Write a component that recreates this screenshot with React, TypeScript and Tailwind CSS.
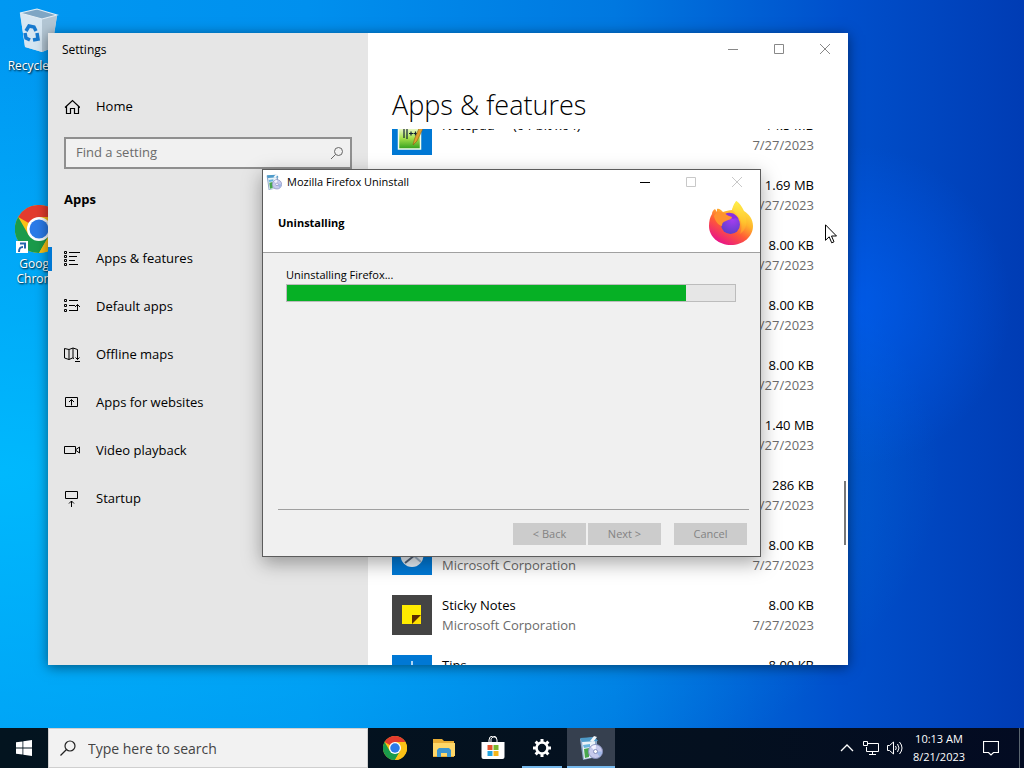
import { ReactNode } from "react";
import clsx from "clsx";

type AppEntry = {
    name?: string;
    publisher?: string;
    size: string;
    date: string;
    icon?: ReactNode;
};

const NotepadIcon = () => (
    <svg viewBox="0 0 40 40" className="size-10 shrink-0 bg-[#0078d4]">
        <defs>
            <linearGradient id="npp" x1="0" y1="0" x2="0" y2="1">
                <stop offset="0.2" stopColor="#f4fbd8" />
                <stop offset="0.6" stopColor="#a6e04a" />
                <stop offset="1" stopColor="#2f9e1e" />
            </linearGradient>
        </defs>
        <rect x="6.500" y="7" width="22" height="27" fill="url(#npp)" stroke="#f5ffe8" strokeWidth="1.500" />
        <path d="M12 10v13M15 10v14M17 18.500h4M19 16.500v4M21.500 18.500h4M23.500 16.500v4" stroke="#123" strokeWidth="1.200" />
        <path d="m21 30 1.500-6L28 11l3.500 1.500L25 26z" fill="#e0a030" stroke="#8b6018" strokeWidth=".6" />
    </svg>
);

const SnipIcon = () => (
    <svg viewBox="0 0 40 40" className="size-10 shrink-0 bg-[#0078d4]">
        <ellipse cx="20" cy="20" rx="11.500" ry="12" fill="#eaf1f7" />
        <path d="m13 28 10-8" stroke="#56657a" strokeWidth="2" fill="none" />
        <path d="m21 20 8 7" stroke="#9fb3c8" strokeWidth="2" fill="none" />
    </svg>
);

const StickyIcon = () => (
    <svg viewBox="0 0 40 40" className="size-10 shrink-0 bg-[#444]">
        <path d="M10 10h19v10l-9 9H10z" fill="#ffec00" />
        <path d="M20 20h9v9h-9z" fill="#ffe000" />
        <path d="M20 20h9l-9 9z" fill="#5c2d00" />
    </svg>
);

const TipsIcon = () => (
    <svg viewBox="0 0 40 40" className="size-10 shrink-0 bg-[#0078d4]">
        <path d="M20 6v8M12 12l3 4M28 12l-3 4" stroke="#e8f4ff" strokeWidth="1.500" />
        <circle cx="20" cy="22" r="6" fill="none" stroke="#fff" strokeWidth="1.500" />
    </svg>
);

const apps: AppEntry[] = [
    { name: "Notepad++ (64-bit x64)", size: "14.5 MB", date: "7/27/2023", icon: <NotepadIcon /> },
    { size: "1.69 MB", date: "7/27/2023" },
    { size: "8.00 KB", date: "7/27/2023" },
    { size: "8.00 KB", date: "7/27/2023" },
    { size: "8.00 KB", date: "7/27/2023" },
    { size: "1.40 MB", date: "7/27/2023" },
    { size: "286 KB", date: "7/27/2023" },
    { publisher: "Microsoft Corporation", size: "8.00 KB", date: "7/27/2023", icon: <SnipIcon /> },
    { name: "Sticky Notes", publisher: "Microsoft Corporation", size: "8.00 KB", date: "7/27/2023", icon: <StickyIcon /> },
    { name: "Tips", publisher: "Microsoft Corporation", size: "8.00 KB", date: "7/27/2023", icon: <TipsIcon /> },
];

const navItems = [
    {
        label: "Apps & features",
        active: true,
        icon: <path d="M.5.5h2v2h-2zM.5 4.500h2v2h-2zM.5 8.500h2v2h-2zM.5 12.500h2v2h-2zM5 1.500h11M5 5.500h8M5 9.500h6M5 13.500h9" />,
    },
    {
        label: "Default apps",
        icon: <path d="M.5.5h2v2h-2zM.5 5.500h2v2h-2zM.5 10.500h2v2h-2zM5 1.500h9M5 6.500h6M5 11.500h8M13.500 12V5.500M11 8l2.500-2.500L16 8" />,
    },
    {
        label: "Offline maps",
        icon: <path d="M10 11.500 8.500 11 5 12.500.5 11V1.500L5 2.500l4-1.500L13.500 2.500v3M5 2.500v10M9 1v10M13.500 5v7.500M11.500 10.500l2 2 2-2M11 14.500h5" />,
    },
    { label: "Apps for websites", icon: <path d="M1.500 2.500h12v9h-12zM7.500 10.500v-6M5 7l2.500-2.500L10 7" /> },
    { label: "Video playback", icon: <path d="M.5 3.500h11v7H.5zM12 6.500l3.500-2.500v6L12 7.500" /> },
    { label: "Startup", icon: <path d="M1.500.5h12v7h-12zM7.500 16v-6M5 12.500 7.500 10l2.500 2.500" /> },
];

const LineIcon = ({ children, className }: { children: ReactNode; className?: string }) => (
    <svg viewBox="0 0 16 16" fill="none" stroke="currentColor" className={clsx("size-4 shrink-0", className)}>
        {children}
    </svg>
);

const ChromeLogo = ({ className }: { className: string }) => (
    <svg viewBox="0 0 48 48" className={className}>
        <circle cx="24" cy="24" r="24" fill="#fbc116" />
        <path d="M24 24 3.200 12A24 24 0 0 1 44.800 12z" fill="#e33b2e" />
        <path d="M3.200 12A24 24 0 0 0 24 48l10.400-18L24 24l-10.400 6z" fill="#1a9b4b" />
        <path d="M24 12h20.800A24 24 0 0 1 24 48l10.400-18z" fill="#fbc116" />
        <circle cx="24" cy="24" r="12" fill="#fff" />
        <circle cx="24" cy="24" r="9.500" fill="#2b7be9" />
    </svg>
);

const RecycleBin = () => (
    <svg viewBox="0 0 40 44" className="h-11 w-10">
        <path d="m1 5 5 34 17 5 10-4 5-32z" fill="#d5e0e8" opacity=".95" />
        <path d="m1 5 22 6v33L6 39z" fill="#d6e6f2" />
        <path d="m23 11 15-4-5 33-10 4z" fill="#b3c6d4" />
        <path d="M1 5 18 1l20 6-15 4z" fill="#7fa6c4" stroke="#e4eef5" strokeWidth="1.200" />
        <path d="m7 23 3-5 5 1 2 4M18 25l1 6-5 1M11 32l-4-2-1-5" fill="none" stroke="#1679cf" strokeWidth="3.500" />
    </svg>
);

const InstallerIcon = ({ className }: { className: string }) => (
    <svg viewBox="0 0 24 24" className={className}>
        <path d="m1 3 14-2 3 4v16L4 24z" fill="#8ba6c8" />
        <path d="m3 5 13-2v18l-11 2z" fill="#eaf2f8" />
        <path d="m1 2 15-1 3 4-16 1z" fill="#4e9bc9" />
        <path d="m11 5 4-5 3 1-4 5z" fill="#f2f6fa" />
        <path d="m4 9 7-1v3l-6 1z" fill="#68b5dd" />
        <path d="m5 13 5-1v9l-4 1z" fill="#48a64e" />
        <circle cx="16.500" cy="15.500" r="7" fill="#c6c9ec" stroke="#8790bd" />
        <path d="M16.500 15.500 12 11a6 6 0 0 1 5-2z" fill="#f3f3ff" />
        <path d="m16.500 15.500 4 5a6 6 0 0 0 2.500-5z" fill="#9eb7e6" />
        <circle cx="16.500" cy="15.500" r="2" fill="#fff" stroke="#8790bd" />
    </svg>
);

const FirefoxLogo = () => (
    <svg viewBox="0 0 46 46" className="h-[46px] w-[46px]">
        <defs>
            <linearGradient id="fxBody" x1=".85" y1=".1" x2=".3" y2="1">
                <stop offset="0" stopColor="#fff04a" />
                <stop offset=".35" stopColor="#ffb52b" />
                <stop offset=".62" stopColor="#ff5b36" />
                <stop offset="1" stopColor="#e8128a" />
            </linearGradient>
            <linearGradient id="fxFlame" x1=".6" y1="0" x2=".5" y2="1">
                <stop offset="0" stopColor="#fff34d" />
                <stop offset=".6" stopColor="#ffc52e" />
                <stop offset="1" stopColor="#ff8a2b" />
            </linearGradient>
            <radialGradient id="fxGlobe" cx=".6" cy=".25" r=".8">
                <stop offset="0" stopColor="#a63df0" />
                <stop offset="1" stopColor="#5a40c8" />
            </radialGradient>
        </defs>
        <path d="M4 14c0-2 1-4 3-5l2 3V9c2-1 4 1 6 3 3-1 6-2 9-2l4-9c4 2 6 6 8 10 5 3 9 8 9 15 0 11-10 19-22 19S1 37 1 26c0-5 1-9 3-12z" fill="url(#fxBody)" />
        <path d="M24 10c1-5 3-8 5-9 1 6 6 8 8 14 3 8 1 15-5 19 2-5 2-11 0-15-2-4-4-6-8-9z" fill="url(#fxFlame)" />
        <circle cx="22.500" cy="24.500" r="9.500" fill="url(#fxGlobe)" />
        <path d="M17 14c5-3 12 0 14 6-2-2-4-2-6-1z" fill="#8a2fe0" />
        <path d="M6 16c2-4 6-5 10-3 2 2 5 3 8 4 0 2-4 3-6 4-3 1-4 2-4 5-4-1-7-5-8-10z" fill="#ff922e" />
    </svg>
);

const CaptionButtons = ({ dialog }: { dialog?: boolean }) => (
    <div className="flex">
        <button aria-label="Minimize" className={clsx("flex w-[46px] items-center justify-center", dialog ? "h-6 text-black" : "h-8 text-[#888]")}>
            <svg viewBox="0 0 10 10" className="size-[10px]"><path d="M0 5.500h10" stroke="currentColor" /></svg>
        </button>
        <button aria-label="Maximize" className={clsx("flex w-[46px] items-center justify-center", dialog ? "h-6 text-[#c8c8c8]" : "h-8 text-[#888]")}>
            <svg viewBox="0 0 10 10" className="size-[10px]"><path d="M.5.5h9v9h-9z" fill="none" stroke="currentColor" /></svg>
        </button>
        <button aria-label="Close" className={clsx("flex w-[46px] items-center justify-center", dialog ? "h-6 text-[#c8c8c8]" : "h-8 text-[#888]")}>
            <svg viewBox="0 0 10 10" className="size-[10px]"><path d="m0 0 10 10M10 0 0 10" stroke="currentColor" /></svg>
        </button>
    </div>
);

const Sidebar = () => (
    <aside className="flex w-80 shrink-0 flex-col bg-[#e6e6e6]">
        <div className="flex h-[34px] items-center px-[14px] text-xs">Settings</div>
        <a href="#home" className="mt-4 flex h-12 items-center gap-4 px-4">
            <LineIcon><path d="M1 8.500 8.500 1.500 16 8.500M2.500 7.500V14.500H6.500V9.500H10.500V14.500H14.500V7.500" strokeWidth="1.200" /></LineIcon>
            Home
        </a>
        <label className="mx-4 mt-[6px] flex h-8 items-center border-2 border-[#8f8f8f] bg-[#f1f1f1] pr-[5px] pl-[10px]">
            <input aria-label="Find a setting" placeholder="Find a setting" className="min-w-0 flex-1 bg-transparent outline-none placeholder:text-[#6b6b6b]" />
            <LineIcon className="text-[#666]"><path d="M6.500 9.500 2 14" /><circle cx="9.500" cy="6.500" r="4" /></LineIcon>
        </label>
        <h2 className="mt-5 px-4 leading-5 font-bold">Apps</h2>
        <nav className="mt-[26px] flex flex-col">
            {navItems.map((item) => (
                <a key={item.label} href="#settings" className="relative flex h-12 items-center gap-4 px-4">
                    {item.active && <span className="absolute left-0 h-6 w-1 bg-[#0078d4]" />}
                    <LineIcon>{item.icon}</LineIcon>
                    {item.label}
                </a>
            ))}
        </nav>
    </aside>
);

const SettingsWindow = () => (
    <section className="absolute top-[33px] right-44 bottom-[63px] left-12 flex bg-white text-[13px] text-black shadow-[0_2px_12px_rgba(0,0,0,0.5)]">
        <Sidebar />
        <main className="flex min-w-0 flex-1 flex-col">
            <div className="flex justify-end"><CaptionButtons /></div>
            <h1 className="mt-6 pl-6 text-[27px] leading-8 font-light">Apps &amp; features</h1>
            <div className="relative mt-2 min-h-0 flex-1 overflow-hidden pr-[34px] pl-6">
                <ul className="-mt-6">
                    {apps.map((app, i) => (
                        <li key={i} className="flex h-[60px] gap-[10px] py-[10px] leading-5">
                            {app.icon}
                            <div className="flex-1">
                                <div className="h-5">{app.name}</div>
                                <div className="h-5 text-[#6b6b6b]">{app.publisher}</div>
                            </div>
                            <div className="text-right">
                                <div>{app.size}</div>
                                <div className="text-[#6b6b6b]">{app.date}</div>
                            </div>
                        </li>
                    ))}
                </ul>
                <span className="absolute top-[352px] right-[2px] h-16 w-[2px] bg-[#777]" />
            </div>
        </main>
    </section>
);

const UninstallDialog = () => {
    const progress = 89;
    return (
        <section role="dialog" aria-label="Mozilla Firefox Uninstall" className="absolute top-[169px] left-[262px] w-[499px] border border-[#5c5c5c] bg-[#f0f0f0] text-[11px] text-black shadow-[0_6px_18px_rgba(0,0,0,0.35)]">
            <div className="bg-white">
                <div className="flex h-6 items-center">
                    <InstallerIcon className="ml-[3px] size-4" />
                    <span className="ml-[5px] flex-1">Mozilla Firefox Uninstall</span>
                    <CaptionButtons dialog />
                </div>
                <div className="flex h-[59px] items-center justify-between border-b border-[#a0a0a0] pr-1.5 pl-[15px]">
                    <h2 className="font-bold">Uninstalling</h2>
                    <FirefoxLogo />
                </div>
            </div>
            <div className="flex h-[303px] flex-col px-[15px] pb-[11px]">
                <div className="px-2 pt-[14px]">
                    <label htmlFor="progress" className="block leading-4">Uninstalling Firefox...</label>
                    <div id="progress" role="progressbar" aria-valuenow={progress} className="mt-px mr-px h-[18px] border border-[#bcbcbc] bg-[#e6e6e6]">
                        <div className="h-full bg-[#06b025]" style={{ width: `${progress}%` }} />
                    </div>
                </div>
                <div className="mt-auto mr-[-4px] flex justify-end border-t border-[#a0a0a0] pt-[13px] pr-[2px]">
                    <button disabled className="mr-[2px] h-[22px] w-[73px] bg-[#ccc] text-[#838383]">&lt; Back</button>
                    <button disabled className="mr-[13px] h-[22px] w-[73px] bg-[#ccc] text-[#838383]">Next &gt;</button>
                    <button disabled className="h-[22px] w-[73px] bg-[#ccc] text-[#838383]">Cancel</button>
                </div>
            </div>
        </section>
    );
};

const Taskbar = () => (
    <footer className="flex h-10 shrink-0 bg-[linear-gradient(90deg,#03141f,#04101f_70%,#030b22)] text-white">
        <button aria-label="Start" className="flex w-12 items-center justify-center">
            <svg viewBox="0 0 16 16" className="size-4" fill="#fff">
                <path d="M0 2.300 6.500 1.400v6.200H0zM7.300 1.300 16 0v7.600H7.300zM0 8.400h6.500v6.200L0 13.700zM7.300 8.400H16V16l-8.700-1.300z" />
            </svg>
        </button>
        <label className="flex w-80 items-center gap-3 border border-[#cfcfcf] bg-[#f2f2f2] pl-[11px] text-[#333]">
            <LineIcon className="text-[#222]"><circle cx="10" cy="6" r="5" strokeWidth="1.200" /><path d="M6.500 9.500.5 15.500" strokeWidth="1.200" /></LineIcon>
            <input aria-label="Type here to search" placeholder="Type here to search" className="min-w-0 flex-1 bg-transparent pt-px text-sm outline-none placeholder:text-[#444]" />
        </label>
        <div className="ml-[3px] flex gap-px">
            <button aria-label="Chrome" className="flex w-12 items-center justify-center"><ChromeLogo className="size-6" /></button>
            <button aria-label="File Explorer" className="flex w-12 items-center justify-center">
                <svg viewBox="0 0 24 24" className="size-6">
                    <path d="M1 3h9l2 2h10v16H1z" fill="#e9ad35" />
                    <path d="M1 7h22v13H1z" fill="#ffd768" />
                    <path d="M5 21v-7l2-2h10l2 2v7h-4v-4H9v4z" fill="#3c95cf" />
                </svg>
            </button>
            <button aria-label="Microsoft Store" className="flex w-12 items-center justify-center">
                <svg viewBox="0 0 24 24" className="size-6">
                    <path d="M8 7V4a4 4 0 0 1 8 0v3M10 6V3a3 3 0 0 1 5-1" fill="none" stroke="#fff" />
                    <path d="M.5 6h23v15a2 2 0 0 1-2 2h-19a2 2 0 0 1-2-2z" fill="#fff" />
                    <path d="M6.500 9h5v5h-5z" fill="#e5532d" />
                    <path d="M12.500 9h5v5h-5z" fill="#7cb82f" />
                    <path d="M6.500 15h5v5h-5z" fill="#20a4e0" />
                    <path d="M12.500 15h5v5h-5z" fill="#f5b51b" />
                </svg>
            </button>
            <button aria-label="Settings" className="relative flex w-12 items-center justify-center">
                <svg viewBox="0 0 20 20" className="size-5" fill="none" stroke="#fff">
                    <circle cx="10" cy="10" r="5.500" strokeWidth="2.600" />
                    <path d="M10 1v3M10 16v3M1 10h3M16 10h3M3.600 3.600l2.200 2.200M14.200 14.200l2.200 2.200M3.600 16.400l2.200-2.200M14.200 5.800l2.200-2.200" strokeWidth="3" />
                </svg>
                <span className="absolute inset-x-1 bottom-0 h-[2px] bg-[#76b9ed]" />
            </button>
            <button aria-label="Mozilla Firefox Uninstall" className="relative flex w-12 items-center justify-center bg-[#36404f]">
                <InstallerIcon className="size-6" />
                <span className="absolute inset-x-0 bottom-0 h-[2px] bg-[#76b9ed]" />
            </button>
        </div>
        <div className="ml-auto flex items-center">
            <button aria-label="Show hidden icons" className="flex w-6 justify-center">
                <LineIcon><path d="m2 11 6-6 6 6" strokeWidth="1.300" /></LineIcon>
            </button>
            <button aria-label="Network" className="flex w-6 justify-center">
                <LineIcon><path d="M5 3.500h10.500v8H3.500V7M.5 1.500h4v4h-4zM9.500 12v2.500M6 14.500h7" /></LineIcon>
            </button>
            <button aria-label="Volume" className="flex w-6 justify-center">
                <LineIcon><path d="M.5 5.500h2l4-3.500v12l-4-3.500h-2zM8.500 6q1.500 2 0 4M10.500 4q3 4 0 8M12.500 2q5 6 0 12" /></LineIcon>
            </button>
            <div className="w-16 text-center text-[11px] leading-[18px]">
                <div>10:13 AM</div>
                <div>8/21/2023</div>
            </div>
            <button aria-label="Notifications" className="flex w-10 justify-center">
                <LineIcon><path d="M.5 1.500h15v11h-5L8 15l-2.500-2.500h-5z" strokeWidth="1.200" /></LineIcon>
            </button>
            <span className="ml-2 h-10 w-[5px] border-l border-[#5b6670]" />
        </div>
    </footer>
);

export default function App() {
    return (
        <div className="flex h-screen flex-col overflow-hidden font-['Open_Sans','Noto_Sans',sans-serif]">
            <div className="relative min-h-0 flex-1 bg-[radial-gradient(circle_at_83%_42%,rgba(0,100,255,0.55),transparent_17%),radial-gradient(ellipse_at_0%_65%,rgba(0,190,255,0.85),transparent_65%),linear-gradient(90deg,#0098f2_0%,#0090ee_30%,#0078e0_60%,#0050cc_82%,#003cb4_100%)]">
                <div className="absolute top-2 left-0 w-[78px] text-center text-xs leading-[15px] text-white [text-shadow:1px_1px_2px_#000]">
                    <div className="flex justify-center"><RecycleBin /></div>
                    <div className="mt-[6px]">Recycle Bin</div>
                </div>
                <div className="absolute top-[205px] left-0 w-[78px] text-center text-xs leading-[15px] text-white [text-shadow:1px_1px_2px_#000]">
                    <div className="relative flex justify-center">
                        <ChromeLogo className="size-12" />
                        <svg viewBox="0 0 12 12" className="absolute bottom-0 left-4 size-3 bg-white">
                            <path d="M3 11c0-4 1-5 4-5M4 2.500h5v5" fill="none" stroke="#2566ad" strokeWidth="2" />
                        </svg>
                    </div>
                    <div className="mt-[3px]">Google Chrome</div>
                </div>
                <SettingsWindow />
                <UninstallDialog />
                <svg viewBox="0 0 12 20" className="absolute top-[224px] left-[825px] h-5 w-3">
                    <path d="M.5.8v15.500l3.700-3.500 2.500 6 2.300-1-2.500-5.800h5z" fill="#fff" stroke="#000" />
                </svg>
            </div>
            <Taskbar />
        </div>
    );
}
